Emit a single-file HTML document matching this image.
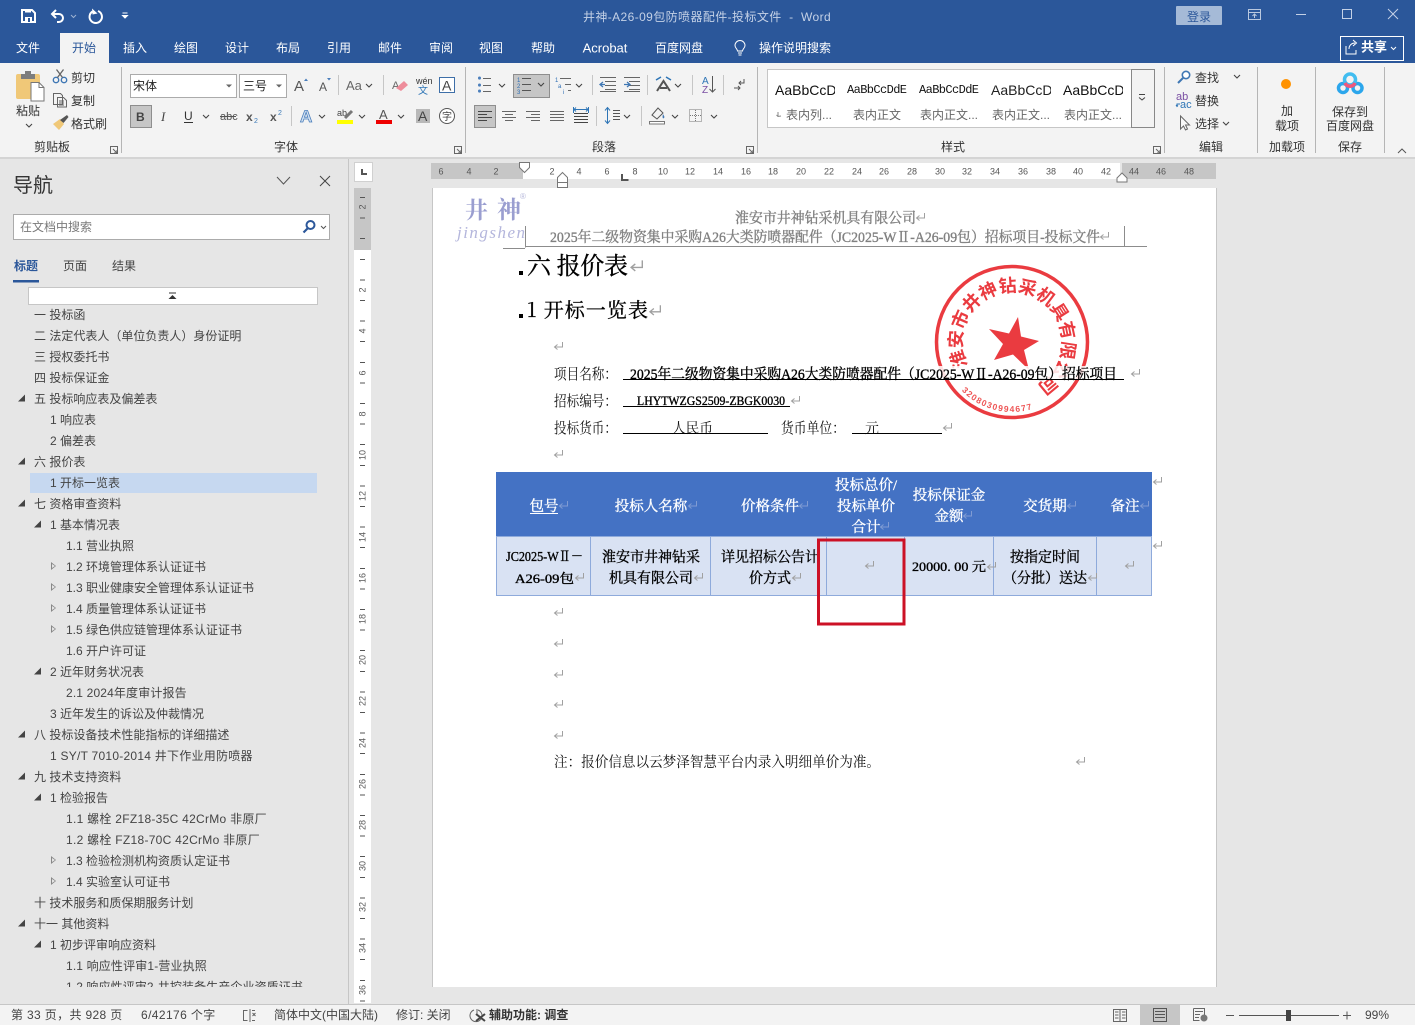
<!DOCTYPE html>
<html lang="zh"><head><meta charset="utf-8"><title>井神-A26-09包防喷器配件-投标文件 - Word</title>
<style>
html,body{margin:0;padding:0;width:1415px;height:1025px;overflow:hidden;background:#e6e6e6}
body{position:relative;font-family:"Liberation Sans","Noto Sans CJK SC",sans-serif;font-size:12px;color:#444}
.a{position:absolute}
.t{position:absolute;white-space:nowrap;transform:translate(-50%,-50%);line-height:1;margin-top:1px}
.l{position:absolute;white-space:nowrap;transform:translateY(-50%);line-height:1;margin-top:1px}
.w{color:#fff}
.s{position:absolute;top:67px;height:86px;width:1px;background:#b5b5b5}
.n{position:absolute;white-space:nowrap;transform:translateY(-50%);line-height:1;color:#444;margin-top:1px}
.ex{position:absolute;width:0;height:0;border-left:7px solid transparent;border-bottom:7px solid #444;transform:translateY(-50%)}
.co{position:absolute;width:0;height:0;border-top:4px solid transparent;border-bottom:4px solid transparent;border-left:5px solid #888;transform:translateY(-50%)}
.co:after{content:"";position:absolute;left:-4px;top:-2.5px;width:0;height:0;border-top:2.5px solid transparent;border-bottom:2.5px solid transparent;border-left:3px solid #e6e6e6}
.r{position:absolute;top:172px;transform:translate(-50%,-50%);font-size:9px;color:#555;line-height:1}
.v{position:absolute;left:362.5px;transform:translate(-50%,-50%) rotate(-90deg);font-size:9px;color:#555;line-height:1}
.g{position:absolute;overflow:hidden;white-space:nowrap;top:82px;height:16px;line-height:16px;width:60px;color:#111}
.gl{position:absolute;white-space:nowrap;top:108px;height:14px;line-height:14px;color:#666;font-size:12px}
svg{position:absolute;left:0;top:0}
.b{font-family:"Liberation Serif","Noto Serif CJK SC",serif;stroke:currentColor;stroke-width:.35}
.d{font-family:"Liberation Serif","Noto Serif CJK SC",serif}
</style></head><body>

<!-- title bar + ribbon backgrounds -->
<div class="a" style="left:0;top:0;width:1415px;height:63px;background:#2b579a"></div>
<div class="a" style="left:0;top:63px;width:1415px;height:94px;background:#f3f3f3"></div>
<div class="a" style="left:0;top:157px;width:1415px;height:2px;background:#d4d4d4"></div>
<div class="a" style="left:60px;top:33px;width:49px;height:30px;background:#f3f3f3"></div>

<span class="t" style="left:707px;top:16px;color:#c4d1e6;letter-spacing:.4px">井神-A26-09包防喷器配件-投标文件&nbsp;&nbsp;-&nbsp;&nbsp;Word</span>
<div class="a" style="left:1176px;top:6px;width:46px;height:19px;background:#a5bad7;border-radius:1px"></div>
<span class="t" style="left:1199px;top:16px;color:#2b579a">登录</span>

<span class="t w" style="left:28px;top:47px">文件</span>
<span class="t" style="left:84px;top:47px;color:#2b579a">开始</span>
<span class="t w" style="left:135px;top:47px">插入</span>
<span class="t w" style="left:186px;top:47px">绘图</span>
<span class="t w" style="left:237px;top:47px">设计</span>
<span class="t w" style="left:288px;top:47px">布局</span>
<span class="t w" style="left:339px;top:47px">引用</span>
<span class="t w" style="left:390px;top:47px">邮件</span>
<span class="t w" style="left:441px;top:47px">审阅</span>
<span class="t w" style="left:491px;top:47px">视图</span>
<span class="t w" style="left:543px;top:47px">帮助</span>
<span class="t w" style="left:605px;top:47px;font-size:13px">Acrobat</span>
<span class="t w" style="left:679px;top:47px">百度网盘</span>
<span class="t w" style="left:795px;top:47px">操作说明搜索</span>
<div class="a" style="left:1340px;top:36px;width:62px;height:23px;border:1px solid #fff"></div>
<span class="t w" style="left:1374px;top:46px;font-weight:700;font-size:13px">共享</span>

<!-- ribbon separators -->
<div class="s" style="left:121px"></div><div class="s" style="left:465px"></div><div class="s" style="left:757px"></div>
<div class="s" style="left:1164px"></div><div class="s" style="left:1257px"></div><div class="s" style="left:1315px"></div><div class="s" style="left:1384px"></div>

<!-- clipboard -->
<span class="t" style="left:28px;top:110px;color:#333">粘贴</span>
<span class="l" style="left:71px;top:77px;color:#333">剪切</span>
<span class="l" style="left:71px;top:100px;color:#333">复制</span>
<span class="l" style="left:71px;top:123px;color:#333">格式刷</span>
<span class="t" style="left:52px;top:146px;color:#333">剪贴板</span>
<span class="t" style="left:286px;top:146px;color:#333">字体</span>
<span class="t" style="left:604px;top:146px;color:#333">段落</span>
<span class="t" style="left:953px;top:146px;color:#333">样式</span>
<span class="t" style="left:1211px;top:146px;color:#333">编辑</span>
<span class="t" style="left:1287px;top:146px;color:#333">加载项</span>
<span class="t" style="left:1350px;top:146px;color:#333">保存</span>

<!-- font group -->
<div class="a" style="left:130px;top:74px;width:105px;height:22px;background:#fff;border:1px solid #ababab"></div>
<div class="a" style="left:239px;top:74px;width:46px;height:22px;background:#fff;border:1px solid #ababab"></div>
<span class="l" style="left:133px;top:85px;color:#222">宋体</span>
<span class="l" style="left:243px;top:85px;color:#222">三号</span>
<div class="a" style="left:130px;top:105px;width:20px;height:21px;background:#c6c6c6;border:1px solid #8e8e8e"></div>
<div class="a" style="left:474px;top:105px;width:20px;height:21px;background:#c6c6c6;border:1px solid #8e8e8e"></div>
<div class="a" style="left:513px;top:74px;width:35px;height:22px;background:#c6c6c6;border:1px solid #8e8e8e"></div>

<!-- style gallery -->
<div class="a" style="left:767px;top:69px;width:363px;height:57px;background:#fff;border:1px solid #c6c6c6"></div>
<div class="a" style="left:1131px;top:69px;width:22px;height:57px;background:#f3f3f3;border:1px solid #888"></div>
<div class="g" style="left:775px;font-size:14px">AaBbCcDdEe</div>
<div class="g" style="left:847px;font-size:12px;font-family:'Liberation Mono',serif;letter-spacing:-.6px">AaBbCcDdEe</div>
<div class="g" style="left:919px;font-size:12px;font-family:'Liberation Mono',serif;letter-spacing:-.6px">AaBbCcDdEe</div>
<div class="g" style="left:991px;font-size:14px;color:#222">AaBbCcDdEe</div>
<div class="g" style="left:1063px;font-size:14px">AaBbCcDdEe</div>
<div class="gl" style="left:786px">表内列...</div>
<div class="gl" style="left:853px">表内正文</div>
<div class="gl" style="left:920px">表内正文...</div>
<div class="gl" style="left:992px">表内正文...</div>
<div class="gl" style="left:1064px">表内正文...</div>

<!-- editing -->
<span class="l" style="left:1195px;top:77px;color:#333">查找</span>
<span class="l" style="left:1195px;top:100px;color:#333">替换</span>
<span class="l" style="left:1195px;top:123px;color:#333">选择</span>
<span class="t" style="left:1287px;top:110px;color:#333">加</span>
<span class="t" style="left:1287px;top:125px;color:#333">载项</span>
<span class="t" style="left:1350px;top:111px;color:#333">保存到</span>
<span class="t" style="left:1350px;top:125px;color:#333">百度网盘</span>

<!-- ribbon icons -->
<svg width="1415" height="160" viewBox="0 0 1415 160" fill="none">
<defs><path id="c" d="M0 0l3 3 3-3" stroke="#444" stroke-width="1.1" fill="none"/></defs>
<!-- QAT -->
<path d="M22 10h10l3 3v9H22z" stroke="#fff" stroke-width="2"/><rect x="25" y="9" width="6" height="3.500" fill="#fff"/><rect x="25" y="17" width="7" height="5" fill="#fff"/><rect x="28" y="18" width="2" height="4" fill="#2b579a"/>
<path d="M52 14h7a4 4 0 0 1 0 8h-2" stroke="#fff" stroke-width="2"/><path d="M56 10l-4 4 4 4" stroke="#fff" stroke-width="2"/>
<path d="M71 15l2.500 2.500 2.500-2.500" stroke="#9db2d2"/>
<path d="M92.500 11.500a6.200 6.200 0 1 0 5.500-.5" stroke="#fff" stroke-width="2"/><path d="M92 8.500l.5 6 5-1z" fill="#fff"/>
<path d="M122.500 13h5M122.500 15.500h5l-2.500 2.500z" stroke="#fff" fill="#fff" stroke-width="1"/>
<!-- window -->
<path d="M1248.500 9.500h12v10h-12zM1248.500 12.500h12M1254.500 18v-4M1252.500 16l2-2 2 2" stroke="#b9c8df"/>
<path d="M1296 14.500h10" stroke="#c4d1e6"/>
<rect x="1342.500" y="9.500" width="9" height="9" stroke="#c4d1e6"/>
<path d="M1388 9l10 10M1398 9l-10 10" stroke="#c4d1e6"/>
<!-- share -->
<path d="M1346 46v8h10v-4M1349 49c0-4 3-6 6-6M1353 40l3.500 3-3.500 3" stroke="#fff"/>
<path d="M1391 47l2.500 2.500 2.500-2.500" stroke="#fff"/>
<!-- lamp -->
<path d="M738 53h4M738.500 55h3M737.500 51c0-2-2.500-3-2.500-5.500a5 5 0 0 1 10 0c0 2.500-2.500 3.500-2.500 5.500z" stroke="#fff"/>
<!-- paste -->
<rect x="16" y="74" width="24" height="25" rx="2" fill="#f0c878"/>
<rect x="21" y="74" width="14" height="5" fill="#7d7d7d"/><rect x="25" y="71" width="6" height="4" fill="#7d7d7d"/>
<path d="M31 82.500h8l5 5v13.500H31z" fill="#fff" stroke="#777"/><path d="M39 82.500v5h5" stroke="#777"/>
<use href="#c" x="26" y="124"/>
<!-- scissors -->
<circle cx="56" cy="80" r="2.700" stroke="#3f77b4" stroke-width="1.400"/><circle cx="64" cy="80" r="2.700" stroke="#3f77b4" stroke-width="1.400"/>
<path d="M57.500 77.500l6-8M62.500 77.500l-6-8" stroke="#666" stroke-width="1.300"/>
<!-- copy -->
<path d="M53.500 93.500h7l2 2v9h-9zM57.500 97.500h6l3 3v6.500h-9z" fill="#f3f3f3" stroke="#666"/><path d="M59 101h5M59 103h5M59 105h5" stroke="#666"/>
<!-- painter -->
<path d="M53 124l7-5 4 5-5 6z" fill="#f0c878"/><path d="M60 120l7-5 1.500 2-5 6z" fill="#555"/>
<path d="M226 84.500h6l-3 3z" fill="#666"/><path d="M276 84.500h6l-3 3z" fill="#666"/>
<!-- font row 1 -->
<text x="294" y="91" font-family="Liberation Sans" font-size="15" fill="#555">A</text><path d="M304 81l2-2.500 2 2.500z" fill="#4a7ebb"/>
<text x="319" y="91" font-family="Liberation Sans" font-size="12" fill="#555">A</text><path d="M327 78l2 2.500 2-2.500z" fill="#4a7ebb"/>
<path d="M338.500 75v20" stroke="#c6c6c6"/>
<text x="346" y="90" font-family="Liberation Sans" font-size="13" fill="#666">Aa</text><use href="#c" x="366" y="84"/>
<path d="M383.500 75v20" stroke="#c6c6c6"/>
<text x="392" y="89" font-family="Liberation Sans" font-size="11" fill="#666">A</text>
<path d="M396 88l8-7 4 4-7 6z" fill="#ee8d9b"/>
<text x="416" y="84" font-family="Liberation Sans" font-size="9" fill="#333">wén</text>
<text x="418" y="94" font-family="Noto Sans CJK SC" font-size="10" fill="#2e75b6">文</text>
<rect x="439.500" y="77.500" width="15" height="15" stroke="#3e6fa8" fill="#fff"/>
<text x="442" y="90.500" font-family="Liberation Sans" font-size="14" fill="#444">A</text>
<!-- font row 2 -->
<text x="136" y="121" font-family="Liberation Sans" font-size="12" font-weight="700" fill="#444">B</text>
<text x="161" y="121" font-family="Liberation Serif" font-size="13" font-style="italic" fill="#444">I</text>
<text x="184" y="120" font-family="Liberation Sans" font-size="12" fill="#333">U</text><path d="M184 122.500h9" stroke="#333"/><use href="#c" x="203" y="115"/>
<text x="220" y="120" font-family="Liberation Sans" font-size="11" fill="#555">abc</text><path d="M220 116.500h16" stroke="#555"/>
<text x="246" y="121" font-family="Liberation Sans" font-size="12" font-weight="700" fill="#555">x</text><text x="254" y="123" font-family="Liberation Sans" font-size="7" fill="#3b7ab8">2</text>
<text x="270" y="121" font-family="Liberation Sans" font-size="12" font-weight="700" fill="#555">x</text><text x="278" y="115" font-family="Liberation Sans" font-size="7" fill="#3b7ab8">2</text>
<path d="M291.500 106v20" stroke="#c6c6c6"/>
<text x="300" y="122" font-family="Liberation Sans" font-size="17" font-weight="700" fill="#d5e3f3" stroke="#4a7ebb" stroke-width=".8">A</text><use href="#c" x="319" y="115"/>
<text x="337" y="116" font-family="Liberation Sans" font-size="9" fill="#444">ab</text><path d="M345 118l7-7" stroke="#777" stroke-width="3"/><rect x="337" y="120" width="16" height="4" fill="#ffff00"/><use href="#c" x="359" y="115"/>
<text x="379" y="119" font-family="Liberation Sans" font-size="13" fill="#555">A</text><rect x="376" y="120" width="16" height="4" fill="#ee0000"/><use href="#c" x="398" y="115"/>
<rect x="416" y="109" width="14" height="14" fill="#b8b8b8"/><text x="418" y="121" font-family="Liberation Sans" font-size="14" fill="#444">A</text>
<circle cx="447" cy="116" r="7.500" stroke="#555" fill="#fff"/><text x="442" y="120" font-family="Noto Sans CJK SC" font-size="10" fill="#444">字</text>
<!-- para row 1 -->
<path d="M479.500 78v.1M479.500 85v.1M479.500 91v.1" stroke="#4a7ebb" stroke-width="3" stroke-linecap="round"/><path d="M483 78.500h8M483 85.500h8M483 91.500h8" stroke="#666"/><use href="#c" x="499" y="84"/>
<text x="517" y="82" font-family="Liberation Sans" font-size="6" fill="#2f6fb5">1</text><text x="517" y="88" font-family="Liberation Sans" font-size="6" fill="#2f6fb5">2</text><text x="517" y="94" font-family="Liberation Sans" font-size="6" fill="#2f6fb5">3</text>
<path d="M522 78.500h9M522 84.500h9M522 90.500h9" stroke="#555"/><use href="#c" x="538" y="83"/>
<text x="555" y="82" font-family="Liberation Sans" font-size="6" fill="#2f6fb5">1</text><text x="558" y="88" font-family="Liberation Sans" font-size="6" fill="#2f6fb5">a</text><text x="563" y="94" font-family="Liberation Sans" font-size="6" fill="#2f6fb5">i</text>
<path d="M560 78.500h11M565 84.500h6M568 90.500h3" stroke="#666"/><use href="#c" x="576" y="84"/>
<path d="M592.500 75v20" stroke="#c6c6c6"/>
<path d="M605 81.500h11M605 85.500h11M605 89.500h11M600 91.500h16M600 77.500h16" stroke="#666"/><path d="M600 84.500h5M603 82l-3 2.500 3 2.500" stroke="#3f77b4" stroke-width="1.300"/>
<path d="M629 81.500h11M629 85.500h11M629 89.500h11M624 91.500h16M624 77.500h16" stroke="#666"/><path d="M624 84.500h5M627 82l3 2.500-3 2.500" stroke="#3f77b4" stroke-width="1.300"/>
<path d="M647.500 75v20" stroke="#c6c6c6"/>
<path d="M656 80l5-3M671 80l-5-3" stroke="#2e75b6" stroke-width="1.500"/>
<path d="M657 91l6.500-10 6.500 10M660 88h7" stroke="#555" stroke-width="2"/><use href="#c" x="675" y="84"/>
<path d="M692.500 75v20" stroke="#c6c6c6"/>
<text x="702" y="84" font-family="Liberation Sans" font-size="10" fill="#2e75b6">A</text><text x="702" y="93" font-family="Liberation Sans" font-size="10" fill="#7a4fa3">Z</text>
<path d="M712.500 76v16M709.500 89l3 3 3-3" stroke="#555"/>
<path d="M723.500 75v20" stroke="#c6c6c6"/>
<path d="M744 79v4h-5M741 81l-2 2 2 2M734 88h6M738 86l2 2-2 2" stroke="#555"/>
<!-- para row 2 -->
<path d="M478 111.500h14M478 114.500h9M478 117.500h14M478 120.500h9" stroke="#444"/>
<path d="M502 111.500h14M505 114.500h8M502 117.500h14M505 120.500h8" stroke="#666"/>
<path d="M526 111.500h14M531 114.500h9M526 117.500h14M531 120.500h9" stroke="#666"/>
<path d="M550 111.500h14M550 114.500h14M550 117.500h14M550 120.500h14" stroke="#666"/>
<path d="M574 109.500h14M576 107.500l-2 2 2 2M586 107.500l2 2-2 2" stroke="#2e75b6"/><path d="M573.500 107v6M588.500 107v6" stroke="#2e75b6"/>
<path d="M574 113.500h14M574 116.500h14M574 119.500h14M574 122.500h14" stroke="#444"/>
<path d="M596.500 106v20" stroke="#c6c6c6"/>
<path d="M607.500 108v15M605 110.500l2.500-3 2.500 3M605 120.500l2.500 3 2.500-3" stroke="#2e75b6"/>
<path d="M613 110.500h7M613 113.500h7M613 116.500h7M613 119.500h7" stroke="#555"/><use href="#c" x="624" y="115"/>
<path d="M641.500 106v20" stroke="#c6c6c6"/>
<path d="M652 115l6-7 5 5-6 6z" stroke="#555" fill="#f3f3f3"/><path d="M663 114c1 2 2 3 1 4s-2 0-1-4" fill="#3f77b4"/><rect x="649.500" y="121.500" width="15" height="2.500" stroke="#777" fill="#fff"/><use href="#c" x="672" y="115"/>
<rect x="689.500" y="109.500" width="12" height="12" stroke="#777" stroke-dasharray="1 1"/><path d="M695.500 110v11M690 115.500h11" stroke="#777" stroke-dasharray="1 1"/><use href="#c" x="711" y="115"/>
<!-- style dropdown -->
<path d="M1139 94.500h6" stroke="#444"/><path d="M1139 97.500l3 2.500 3-2.500" stroke="#444"/>
<path d="M778 116v-4M776.500 115l1.500 1.500 3-.5" stroke="#888"/>
<!-- launchers -->
<g stroke="#666"><path d="M110.500 146.500h7v7h-7zM113 149l4 4M117 150v3h-3"/><path d="M454.500 146.500h7v7h-7zM457 149l4 4M461 150v3h-3"/><path d="M746.500 146.500h7v7h-7zM749 149l4 4M753 150v3h-3"/><path d="M1153.500 146.500h7v7h-7zM1156 149l4 4M1160 150v3h-3"/></g>
<path d="M1398 153l4-4 4 4" stroke="#555"/>
<!-- edit icons -->
<circle cx="1186" cy="75" r="3.700" stroke="#3f77b4" stroke-width="1.600" fill="#fff"/><path d="M1183 78l-5 5" stroke="#3f77b4" stroke-width="2"/><use href="#c" x="1234" y="75"/>
<text x="1176" y="100" font-family="Liberation Sans" font-size="11" fill="#7a4fa3">ab</text><text x="1180" y="108" font-family="Liberation Sans" font-size="11" fill="#2e75b6">ac</text><path d="M1180 104h-3v2M1176 105l1 1.500 1-1" stroke="#2e75b6"/>
<path d="M1180.500 116v13l3-3 2 4 2-1-2-4h4z" stroke="#666" fill="#f8f8f8"/><use href="#c" x="1223" y="122"/>
<circle cx="1286" cy="84" r="5" fill="#ff9200"/>
<!-- baidu -->
<circle cx="1343" cy="88" r="4.500" stroke="#2ba6ec" stroke-width="3.500"/><circle cx="1357.500" cy="88" r="4.500" stroke="#2ba6ec" stroke-width="3.500"/>
<circle cx="1350" cy="79.500" r="5.500" stroke="#41bdf0" stroke-width="3.500"/>
<path d="M1345 83A5.500 5.500 0 0 0 1355 83" stroke="#f0577b" stroke-width="3.500"/>
</svg>

<!-- NAV PANE -->
<div class="a" style="left:348px;top:159px;width:1px;height:845px;background:#c6c6c6"></div>
<span class="l" style="left:13px;top:185px;font-size:20px;color:#333">导航</span>
<svg width="350" height="310" viewBox="0 0 350 310" fill="none" style="top:0">
<path d="M277 177l6.500 7 6.500-7" stroke="#555"/>
<path d="M320 176l10 10M330 176l-10 10" stroke="#444"/>
<rect x="13.500" y="214.500" width="316" height="25" fill="#fff" stroke="#ababab"/>
<circle cx="310.500" cy="225" r="4" stroke="#2b579a" stroke-width="2" fill="#fff"/><path d="M307.500 228.500l-4 4" stroke="#2b579a" stroke-width="2.200"/>
<path d="M321 226l2.500 2.500 2.500-2.500" stroke="#555"/>
<rect x="13" y="280" width="26" height="2.500" fill="#2b579a"/>
<rect x="28.500" y="287.500" width="289" height="17" fill="#fff" stroke="#c6c6c6"/>
<path d="M169 293h7" stroke="#333"/><path d="M168.500 299l4-4 4 4z" fill="#333"/>
</svg>
<span class="l" style="left:20px;top:226px;color:#7a7a7a">在文档中搜索</span>
<span class="l" style="left:14px;top:265px;color:#2b579a;font-weight:700">标题</span>
<span class="l" style="left:63px;top:265px;color:#444">页面</span>
<span class="l" style="left:112px;top:265px;color:#444">结果</span>

<div class="a" style="left:30px;top:473px;width:287px;height:20px;background:#c6d8f0"></div>
<div class="a" style="left:0;top:305px;width:348px;height:682px;overflow:hidden">
<div class="a" style="left:0;top:-305px;width:348px;height:1030px">
<span class="n" style="left:34px;top:314px">一 投标函</span>
<span class="n" style="left:34px;top:335px">二 法定代表人（单位负责人）身份证明</span>
<span class="n" style="left:34px;top:356px">三 授权委托书</span>
<span class="n" style="left:34px;top:377px">四 投标保证金</span>
<i class="ex" style="left:18px;top:398px"></i><span class="n" style="left:34px;top:398px">五 投标响应表及偏差表</span>
<span class="n" style="left:50px;top:419px">1 响应表</span>
<span class="n" style="left:50px;top:440px">2 偏差表</span>
<i class="ex" style="left:18px;top:461px"></i><span class="n" style="left:34px;top:461px">六 报价表</span>
<span class="n" style="left:50px;top:482px">1 开标一览表</span>
<i class="ex" style="left:18px;top:503px"></i><span class="n" style="left:34px;top:503px">七 资格审查资料</span>
<i class="ex" style="left:34px;top:524px"></i><span class="n" style="left:50px;top:524px">1 基本情况表</span>
<span class="n" style="left:66px;top:545px">1.1 营业执照</span>
<i class="co" style="left:51px;top:566px"></i><span class="n" style="left:66px;top:566px">1.2 环境管理体系认证证书</span>
<i class="co" style="left:51px;top:587px"></i><span class="n" style="left:66px;top:587px">1.3 职业健康安全管理体系认证证书</span>
<i class="co" style="left:51px;top:608px"></i><span class="n" style="left:66px;top:608px">1.4 质量管理体系认证证书</span>
<i class="co" style="left:51px;top:629px"></i><span class="n" style="left:66px;top:629px">1.5 绿色供应链管理体系认证证书</span>
<span class="n" style="left:66px;top:650px">1.6 开户许可证</span>
<i class="ex" style="left:34px;top:671px"></i><span class="n" style="left:50px;top:671px">2 近年财务状况表</span>
<span class="n" style="left:66px;top:692px;letter-spacing:.15px">2.1 2024年度审计报告</span>
<span class="n" style="left:50px;top:713px">3 近年发生的诉讼及仲裁情况</span>
<i class="ex" style="left:18px;top:734px"></i><span class="n" style="left:34px;top:734px">八 投标设备技术性能指标的详细描述</span>
<span class="n" style="left:50px;top:755px;letter-spacing:.25px">1 SY/T 7010-2014 井下作业用防喷器</span>
<i class="ex" style="left:18px;top:776px"></i><span class="n" style="left:34px;top:776px">九 技术支持资料</span>
<i class="ex" style="left:34px;top:797px"></i><span class="n" style="left:50px;top:797px">1 检验报告</span>
<span class="n" style="left:66px;top:818px;letter-spacing:.28px">1.1 螺栓 2FZ18-35C 42CrMo 非原厂</span>
<span class="n" style="left:66px;top:839px;letter-spacing:.28px">1.2 螺栓 FZ18-70C 42CrMo 非原厂</span>
<i class="co" style="left:51px;top:860px"></i><span class="n" style="left:66px;top:860px">1.3 检验检测机构资质认定证书</span>
<i class="co" style="left:51px;top:881px"></i><span class="n" style="left:66px;top:881px">1.4 实验室认可证书</span>
<span class="n" style="left:34px;top:902px">十 技术服务和质保期服务计划</span>
<i class="ex" style="left:18px;top:923px"></i><span class="n" style="left:34px;top:923px">十一 其他资料</span>
<i class="ex" style="left:34px;top:944px"></i><span class="n" style="left:50px;top:944px">1 初步评审响应资料</span>
<span class="n" style="left:66px;top:965px;letter-spacing:.15px">1.1 响应性评审1-营业执照</span>
<span class="n" style="left:66px;top:986px;letter-spacing:.1px">1.2 响应性评审2-井控装备生产企业资质证书</span>
</div></div>

<!-- RULERS -->
<div class="a" style="left:354px;top:162px;width:19px;height:20px;background:#fff;border:1px solid #d0d0d0;box-sizing:border-box"></div>
<div class="a" style="left:361px;top:169px;width:2px;height:6px;background:#555"></div><div class="a" style="left:361px;top:173px;width:6px;height:2px;background:#555"></div>
<div class="a" style="left:431px;top:163px;width:92px;height:16px;background:#c6c6c6"></div>
<div class="a" style="left:523px;top:163px;width:597px;height:16px;background:#fff"></div>
<div class="a" style="left:1122px;top:163px;width:94px;height:16px;background:#c6c6c6"></div>
<span class="r" style="left:441px">6</span><span class="r" style="left:469px">4</span><span class="r" style="left:496px">2</span>
<span class="r" style="left:552px">2</span><span class="r" style="left:579px">4</span><span class="r" style="left:607px">6</span><span class="r" style="left:635px">8</span><span class="r" style="left:663px">10</span><span class="r" style="left:690px">12</span><span class="r" style="left:718px">14</span><span class="r" style="left:746px">16</span><span class="r" style="left:773px">18</span><span class="r" style="left:801px">20</span><span class="r" style="left:829px">22</span><span class="r" style="left:857px">24</span><span class="r" style="left:884px">26</span><span class="r" style="left:912px">28</span><span class="r" style="left:940px">30</span><span class="r" style="left:967px">32</span><span class="r" style="left:995px">34</span><span class="r" style="left:1023px">36</span><span class="r" style="left:1051px">38</span><span class="r" style="left:1078px">40</span><span class="r" style="left:1106px">42</span><span class="r" style="left:1134px">44</span><span class="r" style="left:1161px">46</span><span class="r" style="left:1189px">48</span>
<div class="a" style="left:354px;top:188px;width:17px;height:62px;background:#c6c6c6"></div>
<div class="a" style="left:354px;top:250px;width:17px;height:753px;background:#fff"></div>
<div class="a" style="left:360px;top:197px;width:5px;height:806px;background:repeating-linear-gradient(to bottom,#555 0,#555 1px,transparent 1px,transparent 20.6px)"></div>
<span class="v" style="top:207px">2</span><span class="v" style="top:290px">2</span><span class="v" style="top:331px">4</span><span class="v" style="top:373px">6</span><span class="v" style="top:414px">8</span><span class="v" style="top:455px">10</span><span class="v" style="top:496px">12</span><span class="v" style="top:537px">14</span><span class="v" style="top:578px">16</span><span class="v" style="top:619px">18</span><span class="v" style="top:660px">20</span><span class="v" style="top:701px">22</span><span class="v" style="top:743px">24</span><span class="v" style="top:784px">26</span><span class="v" style="top:825px">28</span><span class="v" style="top:866px">30</span><span class="v" style="top:907px">32</span><span class="v" style="top:948px">34</span><span class="v" style="top:990px">36</span>

<!-- PAGE -->
<div class="a" style="left:432px;top:188px;width:783px;height:799px;background:#fff;border-left:1px solid #c6c6c6;border-right:1px solid #c6c6c6"></div>

<svg width="1415" height="1025" viewBox="0 0 1415 1025" fill="none">
<defs>
<g id="pm"><path d="M9.500 1v5H1.500M4.500 3.500L1.500 6l3 2.500" stroke="#a0a0a0" stroke-width="1" fill="none"/></g>
<g id="pmw"><path d="M9.500 1v5H1.500M4.500 3.500L1.500 6l3 2.500" stroke="#7f9bd3" stroke-width="1" fill="none"/></g>
<path id="arc" d="M968 365.500A50 50 0 1 1 1038.500 384.400"/>
<path id="arcIn" d="M961.600 390.600A70 70 0 0 0 1033.600 408.600"/>
</defs>
<!-- ruler markers -->
<path d="M519.500 162.500h10v5l-5 5-5-5z" fill="#fff" stroke="#777"/>
<path d="M562.500 172.500l5 5v10h-10v-10z" fill="#fff" stroke="#777"/><path d="M557.500 182.500h10" stroke="#777"/>
<path d="M622 174v6h6.500" stroke="#555" stroke-width="2"/>
<path d="M1122 173l5 5v4h-10v-4z" fill="#fff" stroke="#777"/>

<!-- logo -->
<text x="465" y="218" font-family="Noto Serif CJK SC" font-size="23" font-weight="700" fill="#9a9ed0">井</text>
<text x="497" y="218" font-family="Noto Serif CJK SC" font-size="24" font-weight="700" fill="#9a9ed0">神</text>
<text x="457" y="238" font-family="Liberation Serif" font-size="17" font-style="italic" fill="#b4b6dc" textLength="68" lengthAdjust="spacing">jingshen</text>
<text x="520" y="199" font-family="Liberation Sans" font-size="8" fill="#b5b7da">®</text>
<!-- header -->
<text class="b" x="735" y="223" textLength="181" lengthAdjust="spacingAndGlyphs" font-size="14.500" fill="#808080" style="color:#808080">淮安市井神钻采机具有限公司</text>
<use href="#pm" x="915" y="212"/>
<text class="b" x="550" y="242" textLength="550" lengthAdjust="spacingAndGlyphs" font-size="14.500" fill="#808080" style="color:#808080">2025年二级物资集中采购A26大类防喷器配件（JC2025-WⅡ-A26-09包）招标项目-投标文件</text>
<use href="#pm" x="1099" y="231"/>
<path d="M525.500 226v21.500M1124.500 226v21M525.500 246.500H1147M503 248.500h22" stroke="#8c8c8c"/>

<!-- stamp -->
<g fill="#ea3b40" stroke="none">
<circle cx="1012" cy="342" r="75.500" fill="none" stroke="#ea3b40" stroke-width="3.500"/>
<path d="M1018 317L1021 336.500L1039 341L1024 350L1029 370L1013 354.500L994 360L1003 344L989 329L1009 333.500Z"/>
<text font-family="Noto Sans CJK SC" font-size="18" font-weight="700"><textPath href="#arc" startOffset="0">淮安市井神钻采机具有限公司</textPath></text>
<text font-family="Liberation Sans" font-size="8.500" font-weight="700" fill="#ee5555" letter-spacing="1.250"><textPath href="#arcIn" startOffset="0">3208030994677</textPath></text>
</g>

<!-- headings -->
<rect x="519" y="271" width="4" height="4" fill="#000"/>
<text x="527" y="274" font-family="Noto Serif CJK SC" font-size="24" fill="#000" stroke="#000" stroke-width=".35" textLength="101" lengthAdjust="spacing">六 报价表</text>
<use href="#pm" transform="translate(629 259) scale(1.400)"/>
<rect x="519" y="314" width="4" height="4" fill="#000"/>
<text x="527" y="317" font-family="Noto Serif CJK SC" font-size="20" fill="#000" stroke="#000" stroke-width=".3" textLength="121" lengthAdjust="spacing">1 开标一览表</text>
<use href="#pm" transform="translate(648 304) scale(1.300)"/>
<use href="#pm" x="553" y="341"/>

<!-- fields -->
<rect x="623" y="366" width="501" height="13" fill="#fff" opacity=".85"/>
<text class="d" x="554" y="379" font-size="15" fill="#111" textLength="63" lengthAdjust="spacingAndGlyphs">项目名称：</text>
<text class="b" x="630" y="379" font-size="14.500" fill="#000" style="color:#000" textLength="487" lengthAdjust="spacingAndGlyphs">2025年二级物资集中采购A26大类防喷器配件（JC2025-WⅡ-A26-09包）招标项目</text>
<path d="M623 379.500h501" stroke="#000"/>
<use href="#pm" x="1130" y="368"/>
<text class="d" x="554" y="406" font-size="15" fill="#111" textLength="63" lengthAdjust="spacingAndGlyphs">招标编号：</text>
<text class="b" x="637" y="405" font-size="13" fill="#000" style="color:#000" textLength="148" lengthAdjust="spacingAndGlyphs">LHYTWZGS2509-ZBGK0030</text>
<path d="M623 406.500h167" stroke="#000"/>
<use href="#pm" x="790" y="395"/>
<text class="d" x="554" y="433" font-size="15" fill="#111" textLength="63" lengthAdjust="spacingAndGlyphs">投标货币：</text>
<text class="d" x="672" y="433" font-size="14" fill="#111" textLength="41" lengthAdjust="spacingAndGlyphs">人民币</text>
<path d="M623 433.500h145" stroke="#000"/>
<text class="d" x="781" y="433" font-size="15" fill="#111" textLength="64" lengthAdjust="spacingAndGlyphs">货币单位：</text>
<text class="d" x="865" y="433" font-size="14" fill="#111">元</text>
<path d="M852 433.500h90" stroke="#000"/>
<use href="#pm" x="942" y="422"/>
<use href="#pm" x="553" y="449"/>

<!-- table -->
<rect x="496" y="472" width="656" height="64" fill="#4472c4"/>
<rect x="496.500" y="536.500" width="655" height="59" fill="#d9e2f3" stroke="#8eaadb"/>
<path d="M590.500 536v60M710.500 536v60M826.500 536v60M904.500 536v60M993.500 536v60M1096.500 536v60" stroke="#8eaadb"/>
<g class="b" font-size="14.500" fill="#fff" style="color:#fff" text-anchor="middle">
<text x="544" y="511">包号</text>
<text x="651" y="511">投标人名称</text>
<text x="770" y="511">价格条件</text>
<text x="866" y="490">投标总价/</text>
<text x="866" y="511">投标单价</text>
<text x="866" y="532">合计</text>
<text x="949" y="500">投标保证金</text>
<text x="949" y="521">金额</text>
<text x="1045" y="511">交货期</text>
<text x="1125" y="511">备注</text>
</g>
<path d="M530 513.500h28" stroke="#fff"/>
<use href="#pmw" x="558" y="500"/><use href="#pmw" x="687" y="500"/><use href="#pmw" x="798" y="500"/><use href="#pmw" x="879" y="521"/><use href="#pmw" x="962" y="510"/><use href="#pmw" x="1066" y="500"/><use href="#pmw" x="1139" y="500"/>
<use href="#pm" x="1152" y="476"/><use href="#pm" x="1152" y="540"/>
<g class="b" font-size="14.500" fill="#000" style="color:#000">
<text x="506" y="561" textLength="77" lengthAdjust="spacingAndGlyphs" font-size="14">JC2025-WⅡ－</text>
<text x="515" y="583" textLength="59" lengthAdjust="spacingAndGlyphs" font-size="13">A26-09包</text>
<text x="602" y="562" textLength="98" lengthAdjust="spacingAndGlyphs">淮安市井神钻采</text>
<text x="609" y="583" textLength="84" lengthAdjust="spacingAndGlyphs">机具有限公司</text>
<text x="721" y="562" textLength="98" lengthAdjust="spacingAndGlyphs">详见招标公告计</text>
<text x="749" y="583" textLength="42" lengthAdjust="spacingAndGlyphs">价方式</text>
<text x="912" y="571" textLength="74" lengthAdjust="spacingAndGlyphs" font-size="13">20000. 00 元</text>
<text x="1010" y="562" textLength="70" lengthAdjust="spacingAndGlyphs">按指定时间</text>
<text x="1003" y="583" textLength="84" lengthAdjust="spacingAndGlyphs">（分批）送达</text>
</g>
<use href="#pm" x="574" y="572"/><use href="#pm" x="693" y="572"/><use href="#pm" x="791" y="572"/><use href="#pm" x="864" y="560"/><use href="#pm" x="986" y="561"/><use href="#pm" x="1087" y="572"/><use href="#pm" x="1124" y="560"/>
<!-- red box -->
<rect x="818.500" y="540" width="85.500" height="84" stroke="#cc1126" stroke-width="3"/>
<use href="#pm" x="553" y="607"/><use href="#pm" x="553" y="638"/><use href="#pm" x="553" y="669"/><use href="#pm" x="553" y="699"/><use href="#pm" x="553" y="730"/>
<text class="d" x="554" y="767" font-size="14.500" fill="#111" textLength="326" lengthAdjust="spacingAndGlyphs">注：报价信息以云梦泽智慧平台内录入明细单价为准。</text>
<use href="#pm" x="1075" y="756"/>
</svg>

<!-- STATUS BAR -->
<div class="a" style="left:0;top:1004px;width:1415px;height:21px;background:#f3f3f3;border-top:1px solid #c6c6c6;box-sizing:border-box"></div>
<div class="a" style="left:1140px;top:1005px;width:40px;height:20px;background:#c6c6c6"></div>
<span class="l" style="left:11px;top:1014px;color:#444;letter-spacing:.35px">第 33 页，共 928 页</span>
<span class="l" style="left:141px;top:1014px;color:#444;letter-spacing:.4px">6/42176 个字</span>
<span class="l" style="left:274px;top:1014px;color:#444">简体中文(中国大陆)</span>
<span class="l" style="left:396px;top:1014px;color:#444">修订: 关闭</span>
<span class="l" style="left:489px;top:1014px;color:#333;font-weight:700">辅助功能: 调查</span>
<span class="l" style="left:1365px;top:1014px;color:#444">99%</span>
<svg width="1415" height="1025" viewBox="0 0 1415 1025" fill="none">
<path d="M247.500 1010.500h-4v10h4M250 1009v13M252 1010.500h3M252 1020.500h3M252.500 1013l3 3M255.500 1013l-3 3" stroke="#666"/>
<path d="M474 1010a6 6 0 1 0 4 0M477 1009v6" stroke="#666"/><path d="M476 1014l9 7M485 1014l-9 7" stroke="#444" stroke-width="2"/>
<path d="M1113.500 1009.500h6.500v12h-6.500zM1120 1009.500h6.500v12H1120zM1115 1012h3.500M1115 1015h3.500M1115 1018h3.500M1122 1012h3.500M1122 1015h3.500M1122 1018h3.500" stroke="#666"/>
<rect x="1153.500" y="1008.500" width="13" height="13" stroke="#555"/><path d="M1155 1011.500h10M1155 1014.500h10M1155 1017.500h10" stroke="#555"/>
<path d="M1193.500 1008.500h11v7M1193.500 1008.500v12h6M1195 1011.500h8M1195 1014.500h5M1195 1017.500h4" stroke="#666"/><circle cx="1204" cy="1018" r="3.500" fill="#777"/>
<path d="M1226 1015.500h8M1239 1015.500h100M1343 1015.500h8M1347 1011.500v8" stroke="#555"/>
<rect x="1286" y="1010" width="5" height="11" fill="#444"/>
</svg>
</body></html>
